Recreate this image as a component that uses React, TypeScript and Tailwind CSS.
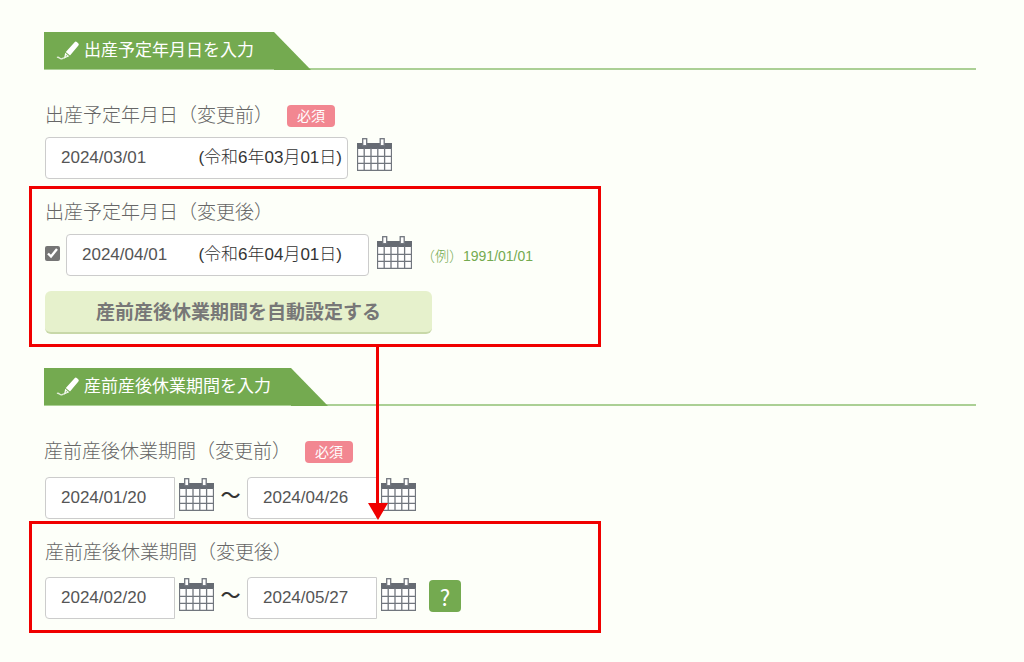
import { useState } from 'react';

const PenIcon = () => (
    <svg width="24" height="22" viewBox="0 0 24 22" aria-hidden="true">
        <path d="M18.6 2.2 Q19.6 1 20.8 2 L22.2 3.2 Q23.4 4.3 22.4 5.5 L14 15.4 L9.8 11.9 Z" fill="#fff" />
        <path d="M9.2 12.8 L13.2 16.2 L8 18.4 Z" fill="#fff" />
        <path d="M10 14.6 L11.6 15.9 L9.6 16.8 Z" fill="#9cc583" />
        <path d="M1 17.6 C3 15.8 3.8 20 6.2 18.6 C7.2 18 7.8 17.8 8.6 18" fill="none" stroke="#fff" strokeOpacity="0.8" strokeWidth="1.3" />
    </svg>
);

const CalendarIcon = () => (
    <svg width="35" height="33" viewBox="0 0 35 33" aria-hidden="true">
        <rect x="0.5" y="5" width="34" height="27.5" fill="#fff" />
        <rect x="0" y="5" width="35" height="6" fill="#666b73" />
        <path
            d="M0.5 10v22.3h34V10M7.2 10v22M14 10v22M20.8 10v22M27.6 10v22M0 18.3h35M0 25.3h35"
            fill="none"
            stroke="#71767e"
            strokeWidth="1.3"
        />
        <rect x="5.7" y="0.7" width="4" height="7" fill="#fff" stroke="#71767e" strokeWidth="1.3" />
        <rect x="23.2" y="0.7" width="4" height="7" fill="#fff" stroke="#71767e" strokeWidth="1.3" />
    </svg>
);

const CalendarButton = ({ label }: { label: string }) => (
    <button type="button" aria-label={label} className="mt-px shrink-0 cursor-pointer">
        <CalendarIcon />
    </button>
);

const SectionTitle = ({ children }: { children: string }) => (
    <h2 className="flex h-[38px] border-b-2 border-[#abd095] text-[17px] text-white">
        <span className="flex h-[37px] items-center gap-1 bg-[#74aa50] pl-3 pr-5 pt-px">
            <PenIcon />
            {children}
        </span>
        <svg width="37" height="38" viewBox="0 0 37 38" className="shrink-0" aria-hidden="true">
            <path d="M0 0 L37 38 H0 Z" fill="#74aa50" />
        </svg>
    </h2>
);

const Required = () => (
    <span className="ml-[14px] flex h-[22px] w-12 items-center justify-center rounded bg-[#f28791] text-[14px] text-white">必須</span>
);

type TDateField = { id: string; value: string; onChange: (value: string) => void };

// date box with the japanese era shown after the date
const EraDateField = ({ id, value, onChange }: TDateField) => {
    const [year, month, day] = value.split('/');
    return (
        <div className="flex h-[42px] w-[303px] items-center rounded border border-[#ccc] bg-white pl-[15px] text-[17px] text-[#555]">
            <input
                id={id}
                value={value}
                onChange={(e) => onChange(e.target.value)}
                className="min-w-0 flex-1 outline-none"
            />
            <span className="shrink-0 font-light text-[#333]">({`令和${Number(year) - 2018}年${month}月${day}日`})</span>
        </div>
    );
};

const ShortDateField = ({ id, label, value, onChange }: TDateField & { label: string }) => (
    <input
        id={id}
        aria-label={label}
        value={value}
        onChange={(e) => onChange(e.target.value)}
        className="h-[42px] w-[130px] rounded-l border border-[#ccc] bg-white pl-[15px] text-[17px] text-[#555] outline-none"
    />
);

const PeriodRow = ({ name, from, to, help }: { name: string; from: string; to: string; help?: boolean }) => {
    const [start, setStart] = useState(from);
    const [end, setEnd] = useState(to);
    return (
        <div className="flex items-start">
            <ShortDateField id={`${name}-start`} label="開始日" value={start} onChange={setStart} />
            <div className="ml-1 flex">
                <CalendarButton label="開始日を選択" />
            </div>
            <span className="w-[33px] pt-1 text-center text-[20px] font-medium text-[#333]">～</span>
            <ShortDateField id={`${name}-end`} label="終了日" value={end} onChange={setEnd} />
            <div className="ml-1 flex">
                <CalendarButton label="終了日を選択" />
            </div>
            {help && (
                <button
                    type="button"
                    className="ml-[13px] mt-[3px] h-8 w-8 rounded bg-[#74aa50] font-['Noto_Sans_CJK_JP',sans-serif] text-[22px] leading-8 text-white"
                >
                    ?
                </button>
            )}
        </div>
    );
};

const App = () => {
    const [before, setBefore] = useState('2024/03/01');
    const [after, setAfter] = useState('2024/04/01');
    const [changed, setChanged] = useState(true);

    return (
        <main className="min-h-screen bg-[#fdfff9] pb-6 pl-11 pr-12 pt-8 font-['Liberation_Sans','Noto_Sans_CJK_JP',sans-serif] text-[#666]">
            <section>
                <SectionTitle>出産予定年月日を入力</SectionTitle>

                <div className="mt-[35px] flex h-[22px] items-center pl-px">
                    <label htmlFor="due-before" className="text-[19px] font-light">出産予定年月日（変更前）</label>
                    <Required />
                </div>
                <div className="mt-[10px] flex items-start gap-[9px] pl-px *:first:pr-[5px]">
                    <EraDateField id="due-before" value={before} onChange={setBefore} />
                    <CalendarButton label="日付を選択" />
                </div>

                <div className="relative -ml-[15px] mt-[7px] w-[572px] border-[3px] border-[#f00000] px-[13px] pb-[10px] pt-[13px]">
                    <label htmlFor="due-after" className="flex h-[22px] items-center text-[19px] font-light">出産予定年月日（変更後）</label>
                    <div className="mt-[10px] flex items-start">
                        <input
                            type="checkbox"
                            aria-label="変更する"
                            checked={changed}
                            onChange={(e) => setChanged(e.target.checked)}
                            className="mr-[6px] mt-3 h-[15px] w-[15px] accent-[#757575]"
                        />
                        <div className="*:pr-[26px]">
                            <EraDateField id="due-after" value={after} onChange={setAfter} />
                        </div>
                        <div className="ml-2 flex pt-px">
                            <CalendarButton label="日付を選択" />
                        </div>
                        <p className="ml-[9px] mt-3 text-[14px] font-light leading-5 text-[#74aa50]">（例）1991/01/01</p>
                    </div>
                    <button
                        type="button"
                        className="mt-[15px] h-[43px] w-[387px] rounded-md border-b-2 border-[#c8d8a8] bg-[#e6f1cc] pt-1 text-[19px] font-bold text-[#777]"
                    >
                        産前産後休業期間を自動設定する
                    </button>
                    {/* arrow down to the period that gets filled in */}
                    <svg width="20" height="176" viewBox="0 0 20 176" className="absolute left-[336px] top-full z-10" aria-hidden="true">
                        <path d="M8 0h3v160h-3z M0 159h20l-10 17z" fill="#f00000" />
                    </svg>
                </div>
            </section>

            <section className="mt-[21px]">
                <SectionTitle>産前産後休業期間を入力</SectionTitle>

                <div className="mt-[35px] flex h-[22px] items-center">
                    <label htmlFor="leave-before-start" className="text-[19px] font-light">産前産後休業期間（変更前）</label>
                    <Required />
                </div>
                <div className="mt-[14px] pl-px">
                    <PeriodRow name="leave-before" from="2024/01/20" to="2024/04/26" />
                </div>

                <div className="-ml-[15px] mt-[2px] w-[572px] border-[3px] border-[#f00000] px-[13px] pb-[11px] pt-[18px]">
                    <label htmlFor="leave-after-start" className="flex h-[22px] items-center text-[19px] font-light">産前産後休業期間（変更後）</label>
                    <div className="mt-[13px]">
                        <PeriodRow name="leave-after" from="2024/02/20" to="2024/05/27" help />
                    </div>
                </div>
            </section>
        </main>
    );
};

export default App;
